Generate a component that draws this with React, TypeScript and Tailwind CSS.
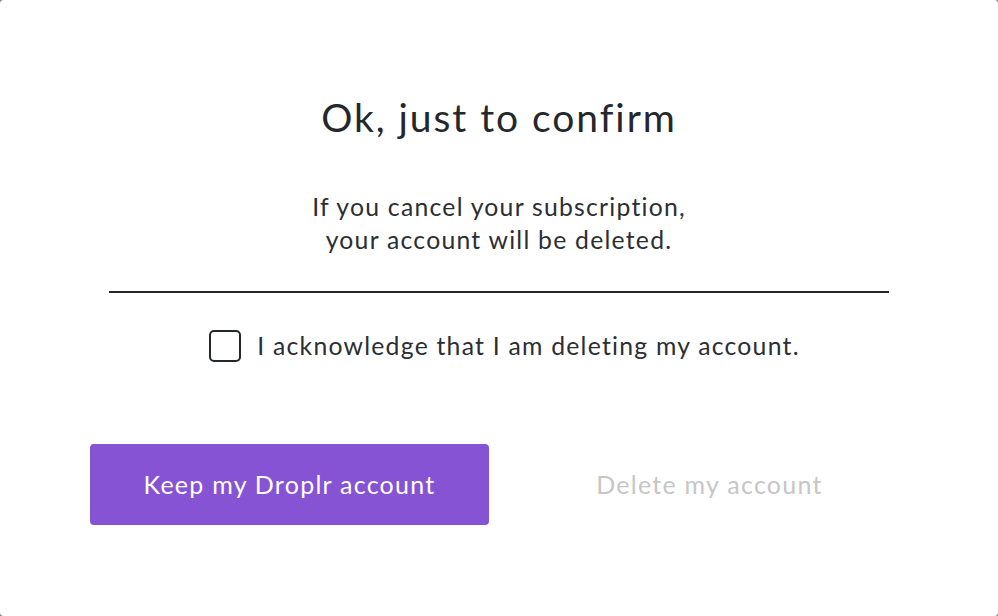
import React, { useState } from "react";

export default function App() {
  const [checked, setChecked] = useState(false);

  return (
    <div className="w-[998px] h-[616px] bg-[#8e8e8e]" style={{ fontFamily: "Lato, 'Open Sans', sans-serif" }}>
      <div className="w-full h-full bg-white rounded-[4px] flex flex-col items-center text-[#24272c]">
        <h1 className="mt-[93px] text-[39px] leading-[48px] font-normal tracking-[0.05em]">Ok, just to confirm</h1>

        <p className="mt-[49px] text-center text-[24.75px] leading-[33px] tracking-[0.05em] text-[#2b2e33]">
          If you cancel your subscription,
          <br />
          your account will be deleted.
        </p>

        <div className="mt-[35px] w-[780px] h-[2px] bg-[#24272c]" />

        {/* Acknowledge checkbox */}
        <label className="mt-[37px] ml-[11px] flex items-center gap-[16px] cursor-pointer">
          <input
            type="checkbox"
            checked={checked}
            onChange={(e) => setChecked(e.target.checked)}
            className="sr-only"
          />
          <span className="w-[32px] h-[32px] rounded-[5px] border-2 border-[#24272c] bg-white" />
          <span className="text-[24.75px] leading-[32px] tracking-[0.05em] text-[#2b2e33]">
            I acknowledge that I am deleting my account.
          </span>
        </label>

        <div className="mt-[82px] w-full px-[90px] flex items-center gap-[22px]">
          <button className="w-[399px] h-[81px] rounded-[4px] bg-[#8553d4] text-white text-[25px] tracking-[0.05em]">
            Keep my Droplr account
          </button>
          <div className="flex-1 text-center text-[25px] tracking-[0.05em] text-[#c6c6c6]">
            Delete my account
          </div>
        </div>
      </div>
    </div>
  );
}
